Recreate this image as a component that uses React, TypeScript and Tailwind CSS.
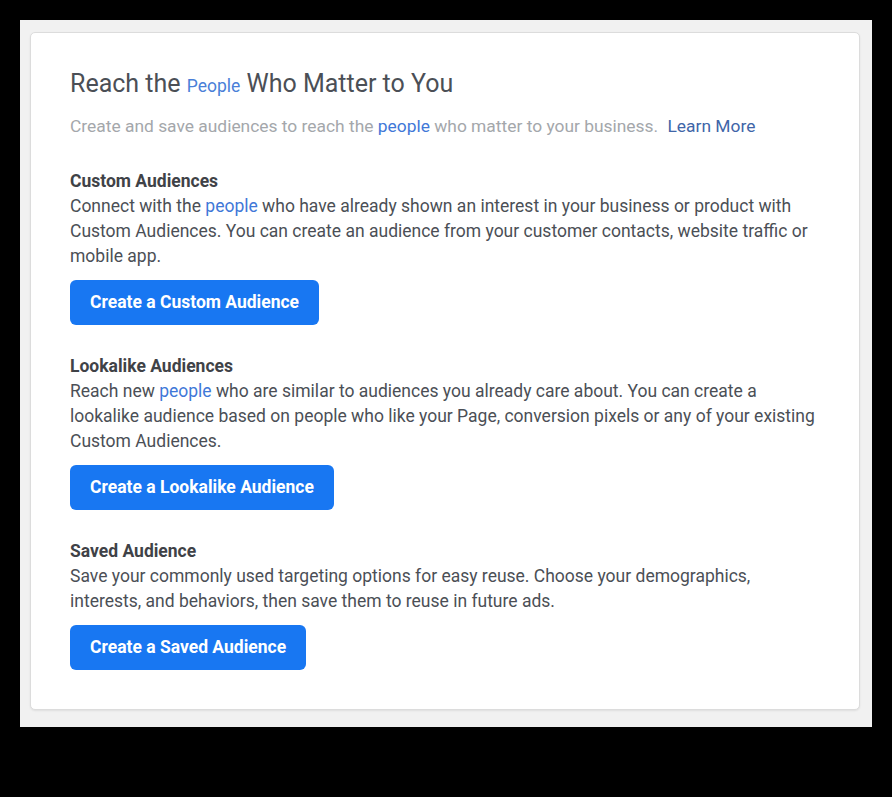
import React from 'react';

const sections = [
  {
    title: 'Custom Audiences',
    before: 'Connect with the ',
    after:
      ' who have already shown an interest in your business or product with Custom Audiences. You can create an audience from your customer contacts, website traffic or mobile app.',
    button: 'Create a Custom Audience',
  },
  {
    title: 'Lookalike Audiences',
    before: 'Reach new ',
    after:
      ' who are similar to audiences you already care about. You can create a lookalike audience based on people who like your Page, conversion pixels or any of your existing Custom Audiences.',
    button: 'Create a Lookalike Audience',
  },
  {
    title: 'Saved Audience',
    before: '',
    after: '',
    text: 'Save your commonly used targeting options for easy reuse. Choose your demographics, interests, and behaviors, then save them to reuse in future ads.',
    button: 'Create a Saved Audience',
  },
];

export default function App() {
  return (
    <div className="w-[892px] h-[797px] bg-black pt-5 pl-5" style={{ fontFamily: 'Roboto, "Liberation Sans", sans-serif' }}>
      <div className="w-[852px] h-[707px] bg-[#f1f1f1] pt-3 pl-[10px]">
        <div className="w-[830px] h-[678px] bg-white rounded-[5px] border border-[#dcdcdc] shadow-[0_1px_2px_rgba(0,0,0,0.08)] pl-[39px] pr-[39px] pt-[35px]">
          <h1 className="text-[25px] leading-[32px] text-[#4b4f56]">
            Reach the <span className="text-[17.5px] text-[#4a7fd8]">People</span> Who Matter to You
          </h1>
          <p className="mt-[12px] text-[17.4px] leading-[25px] text-[#a4a7ab]">
            Create and save audiences to reach the <span className="text-[#3f78d8]">people</span> who matter to your business.{' '}
            <span className="ml-[5px] text-[#4065a8]">Learn More</span>
          </p>
          <div className="mt-[30px] flex flex-col gap-[29px]">
            {sections.map((s) => (
              <div key={s.title} className="flex flex-col items-start">
                <div className="text-[17.5px] leading-[25px] font-bold text-[#3f4247]">{s.title}</div>
                <p className="text-[17.5px] leading-[25px] text-[#4b4f56]">
                  {s.text ? (
                    s.text
                  ) : (
                    <>
                      {s.before}
                      <span className="text-[#3f78d8]">people</span>
                      {s.after}
                    </>
                  )}
                </p>
                <button className="mt-[11px] h-[45px] px-5 rounded-[6px] bg-[#1877f2] text-white font-bold text-[17.5px]">
                  {s.button}
                </button>
              </div>
            ))}
          </div>
        </div>
      </div>
    </div>
  );
}
